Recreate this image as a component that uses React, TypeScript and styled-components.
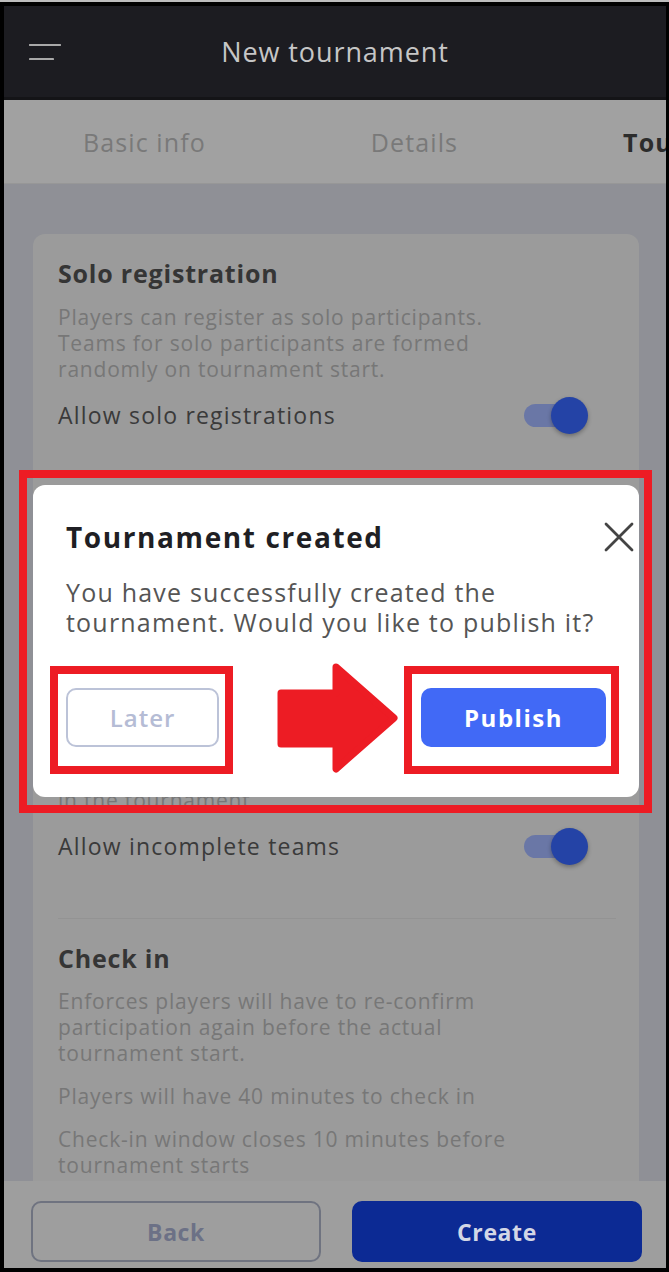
import React from "react";
import styled, { createGlobalStyle } from "styled-components";

const GlobalStyle = createGlobalStyle`
  html, body {
    margin: 0;
    padding: 0;
    background: #000;
  }
  body {
    font-family: "Open Sans", "Noto Sans", sans-serif;
  }
  * {
    box-sizing: border-box;
  }
`;

const TopStrip = styled.div`
  height: 2px;
  background: #bdbdbd;
`;

const Screen = styled.div`
  position: relative;
  margin: 4px 3px 4px 4px;
  height: 1262px;
  display: flex;
  flex-direction: column;
  background: #8f9096;
  overflow: hidden;
`;

/* header */
const Header = styled.header`
  flex: 0 0 94px;
  display: grid;
  grid-template-columns: 1fr auto 1fr;
  align-items: center;
  background: #1c1c21;
  border-bottom: 3px solid #141417;
`;

const MenuIcon = styled.svg`
  margin-left: 25px;
  justify-self: start;
`;

const Title = styled.h1`
  margin: 0;
  font-size: 27px;
  font-weight: 400;
  letter-spacing: 0.9px;
  color: #c6c6c6;
`;

/* tabs */
const Tabs = styled.nav`
  flex: 0 0 84px;
  display: flex;
  align-items: center;
  gap: 165px;
  padding-left: 79px;
  background: #a1a1a1;
  border-bottom: 1px solid #979797;
  overflow: hidden;
  white-space: nowrap;
`;

const Tab = styled.span<{ $active?: boolean }>`
  flex-shrink: 0;
  font-size: 25px;
  letter-spacing: 1.1px;
  font-weight: ${(p) => (p.$active ? 700 : 400)};
  color: ${(p) => (p.$active ? "#2c2c2c" : "#797979")};
`;

/* settings card */
const Body = styled.main`
  flex: 1;
  min-height: 0;
  overflow: hidden;
  padding: 50px 27px 0 29px;
`;

const Card = styled.section`
  background: #9b9b9b;
  border-radius: 12px;
  padding: 0 23px 0 25px;
`;

const Section = styled.div<{ $last?: boolean }>`
  padding: 24px 0 ${(p) => (p.$last ? "40px" : "52px")};
  border-bottom: ${(p) => (p.$last ? "none" : "1px solid #939393")};
`;

const SectionTitle = styled.h2`
  margin: 0;
  font-size: 25px;
  line-height: 30px;
  letter-spacing: 0.8px;
  font-weight: 700;
  color: #353535;
`;

const Desc = styled.p<{ $gap?: number }>`
  margin: ${(p) => p.$gap ?? 16}px 0 0;
  font-size: 21px;
  line-height: 26px;
  letter-spacing: 0.8px;
  color: #777;
`;

const Field = styled.div`
  margin-top: 16px;
  height: 56px;
  border: 1px solid #8a8a8a;
  border-radius: 8px;
  padding: 0 16px;
  display: flex;
  align-items: center;
  font-size: 20px;
  color: #444;
`;

const ToggleRow = styled.div`
  margin-top: 13px;
  height: 40px;
  display: flex;
  align-items: center;
  justify-content: space-between;
  padding-right: 28px;
`;

const RowLabel = styled.span`
  font-size: 23px;
  letter-spacing: 1.2px;
  color: #3a3a3a;
`;

const Switch = styled.span`
  position: relative;
  flex-shrink: 0;
  width: 64px;
  height: 37px;

  &::before {
    content: "";
    position: absolute;
    left: 0;
    top: 7px;
    width: 48px;
    height: 23px;
    border-radius: 12px;
    background: #6a77a6;
  }

  &::after {
    content: "";
    position: absolute;
    right: 0;
    top: 0;
    width: 37px;
    height: 37px;
    border-radius: 50%;
    background: #2443a6;
    box-shadow: 0 2px 4px rgba(0, 0, 0, 0.3);
  }
`;

/* footer */
const Footer = styled.footer`
  flex: 0 0 87px;
  display: flex;
  gap: 31px;
  padding: 20px 24px 0 27px;
  background: #9e9e9e;
`;

const FooterButton = styled.button<{ $primary?: boolean }>`
  flex: 1;
  height: 61px;
  border-radius: 10px;
  font-family: inherit;
  font-size: 23px;
  letter-spacing: 0.6px;
  font-weight: 700;
  border: 2px solid ${(p) => (p.$primary ? "#0c2a94" : "#6f7380")};
  background: ${(p) => (p.$primary ? "#0c2a94" : "transparent")};
  color: ${(p) => (p.$primary ? "#d3d7e6" : "#6c7186")};
`;

/* modal */
const Modal = styled.div`
  position: absolute;
  left: 29px;
  top: 479px;
  width: 606px;
  height: 312px;
  background: #fff;
  border-radius: 12px;
  padding: 36px 33px 0;
`;

const ModalTitle = styled.h3`
  margin: 0;
  font-size: 28px;
  line-height: 32px;
  letter-spacing: 1.6px;
  font-weight: 700;
  color: #1f1f24;
`;

const CloseButton = styled.button`
  position: absolute;
  top: 37px;
  right: 5px;
  width: 30px;
  height: 30px;
  padding: 0;
  border: none;
  background: none;
`;

const ModalText = styled.p`
  margin: 24px 0 0;
  font-size: 25px;
  line-height: 30px;
  letter-spacing: 1.2px;
  color: #555;
`;

const ModalActions = styled.div`
  margin-top: 51px;
  display: flex;
  justify-content: space-between;
`;

const LaterButton = styled.button`
  width: 153px;
  height: 59px;
  border: 2px solid #bcc3d8;
  border-radius: 10px;
  background: #fff;
  font-family: inherit;
  font-size: 24px;
  letter-spacing: 1px;
  font-weight: 600;
  color: #b5bcd5;
`;

const PublishButton = styled.button`
  width: 185px;
  height: 59px;
  border: none;
  border-radius: 10px;
  background: #4169f6;
  font-family: inherit;
  font-size: 24px;
  letter-spacing: 1.5px;
  font-weight: 700;
  color: #fff;
`;

/* red annotations drawn over the screenshot */
const Mark = styled.div<{ $x: number; $y: number; $w: number; $h: number }>`
  position: absolute;
  left: ${(p) => p.$x}px;
  top: ${(p) => p.$y}px;
  width: ${(p) => p.$w}px;
  height: ${(p) => p.$h}px;
  border: 8px solid #ed1c24;
  pointer-events: none;
`;

const Arrow = styled.svg`
  position: absolute;
  left: 273px;
  top: 657px;
`;

export default function App() {
  return (
    <>
      <GlobalStyle />
      <TopStrip />
      <Screen>
        <Header>
          <MenuIcon width="32" height="16" viewBox="0 0 32 16">
            <path d="M1 1h30M1 15h23" stroke="#a9a9a9" strokeWidth="2.2" strokeLinecap="round" />
          </MenuIcon>
          <Title>New tournament</Title>
          <span />
        </Header>

        <Tabs>
          <Tab>Basic info</Tab>
          <Tab>Details</Tab>
          <Tab $active>Tournament settings</Tab>
        </Tabs>

        <Body>
          <Card>
            <Section>
              <SectionTitle>Solo registration</SectionTitle>
              <Desc>
                Players can register as solo participants.
                <br />
                Teams for solo participants are formed
                <br />
                randomly on tournament start.
              </Desc>
              <ToggleRow>
                <RowLabel>Allow solo registrations</RowLabel>
                <Switch />
              </ToggleRow>
            </Section>

            <Section>
              <SectionTitle>Incomplete teams</SectionTitle>
              <Desc>
                Teams can join even if they do not have
                <br />
                the full number of players required for
                <br />
                the selected team size.
              </Desc>
              <Field>Minimum players: 3</Field>
              <Desc $gap={27}>
                Teams with fewer players than the
                <br />
                minimum will not be able to participate
                <br />
                in the tournament
              </Desc>
              <ToggleRow>
                <RowLabel>Allow incomplete teams</RowLabel>
                <Switch />
              </ToggleRow>
            </Section>

            <Section $last>
              <SectionTitle>Check in</SectionTitle>
              <Desc $gap={15}>
                Enforces players will have to re-confirm
                <br />
                participation again before the actual
                <br />
                tournament start.
              </Desc>
              <Desc $gap={17}>Players will have 40 minutes to check in</Desc>
              <Desc $gap={17}>
                Check-in window closes 10 minutes before
                <br />
                tournament starts
              </Desc>
            </Section>
          </Card>
        </Body>

        <Footer>
          <FooterButton>Back</FooterButton>
          <FooterButton $primary>Create</FooterButton>
        </Footer>

        <Modal>
          <ModalTitle>Tournament created</ModalTitle>
          <CloseButton aria-label="Close">
            <svg width="30" height="30" viewBox="0 0 30 30">
              <path d="M2 2l26 26M28 2L2 28" stroke="#444" strokeWidth="2.8" strokeLinecap="round" />
            </svg>
          </CloseButton>
          <ModalText>
            You have successfully created the
            <br />
            tournament. Would you like to publish it?
          </ModalText>
          <ModalActions>
            <LaterButton>Later</LaterButton>
            <PublishButton>Publish</PublishButton>
          </ModalActions>
        </Modal>

        <Mark $x={15} $y={464} $w={633} $h={343} />
        <Mark $x={46} $y={660} $w={183} $h={108} />
        <Mark $x={400} $y={660} $w={215} $h={108} />
        <Arrow width="121" height="110" viewBox="0 0 121 110">
          <path
            d="M4 30H59V4L117 55L59 106V81H4Z"
            fill="#ed1c24"
            stroke="#ed1c24"
            strokeWidth="7"
            strokeLinejoin="round"
          />
        </Arrow>
      </Screen>
    </>
  );
}
